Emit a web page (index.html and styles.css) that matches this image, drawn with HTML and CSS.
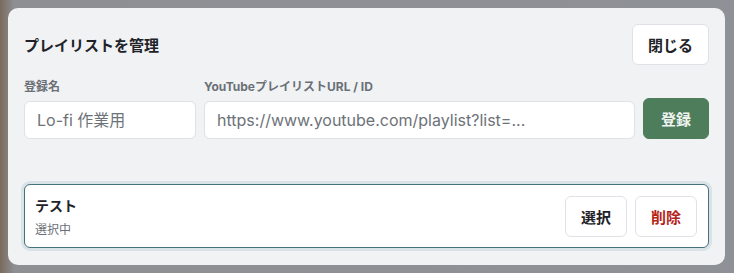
FILE: index.html
```html
<!DOCTYPE html>
<html lang="ja">
<head>
<meta charset="UTF-8" />
<title>プレイリストを管理</title>
<link rel="stylesheet" href="styles.css">
</head>
<body>

<div class="backdrop">
  <div class="modal">
    <div class="modal-head">
      <h2>プレイリストを管理</h2>
      <button class="btn">閉じる</button>
    </div>

    <div class="form-row">
      <div class="field field-name">
        <label>登録名</label>
        <input type="text" placeholder="Lo-fi 作業用" />
      </div>
      <div class="field field-url">
        <label>YouTubeプレイリストURL / ID</label>
        <input type="text" placeholder="https://www.youtube.com/playlist?list=..." />
      </div>
      <button class="btn btn-green">登録</button>
    </div>

    <ul class="list">
      <li class="item active">
        <div class="item-info">
          <div class="item-name">テスト</div>
          <div class="item-state">選択中</div>
        </div>
        <div class="item-actions">
          <button class="btn">選択</button>
          <button class="btn btn-danger">削除</button>
        </div>
      </li>
    </ul>
  </div>
</div>

</body>
</html>
```

FILE: styles.css
```css
* {
  box-sizing: border-box;
}
body {
  margin: 0;
  font-family: "Inter", "Noto Sans CJK JP", sans-serif;
  color: #1f2328;
}
.backdrop {
  width: 734px;
  height: 273px;
  padding: 8px 9px 8px 8px;
  background: linear-gradient(90deg, #7a6a5c 0px, #8d8f93 14px, #8e9196 100%);
}
.modal {
  height: 257px;
  background: #f0f2f4;
  border-radius: 10px;
  padding: 16px 16px 0 16px;
}
.modal-head {
  display: flex;
  align-items: center;
  justify-content: space-between;
}
.modal-head h2 {
  margin: 0;
  font-size: 15px;
  font-weight: 700;
}
.btn {
  font-family: inherit;
  font-size: 15px;
  font-weight: 700;
  color: #1f2328;
  background: #fff;
  border: 1px solid #dfe2e6;
  border-radius: 6px;
  height: 41px;
  padding: 0 15px;
}
.form-row {
  display: flex;
  align-items: flex-end;
  gap: 8px;
  margin-top: 12px;
}
.field label {
  display: block;
  font-size: 12px;
  font-weight: 700;
  color: #6b7077;
  margin-bottom: 7px;
}
.field input {
  width: 100%;
  height: 38px;
  padding: 0 12px;
  border: 1px solid #dfe2e6;
  border-radius: 6px;
  background: #fff;
  font-family: inherit;
  font-size: 16px;
}
.field input::placeholder {
  color: #6d7278;
}
.field-name {
  width: 172px;
}
.field-url {
  flex: 1;
}
.btn-green {
  width: 66px;
  padding: 0;
  background: #4e7d5c;
  border-color: #4e7d5c;
  color: #eef3ef;
}
.list {
  list-style: none;
  margin: 45px 0 0 0;
  padding: 0;
}
.item {
  display: flex;
  align-items: center;
  justify-content: space-between;
  height: 64px;
  padding: 0 11px 0 10px;
  background: #fff;
  border: 1px solid #dfe2e6;
  border-radius: 6px;
}
.item.active {
  border-color: #46707a;
  box-shadow: 0 0 0 3px #d8e2e7;
}
.item-name {
  font-size: 14px;
  font-weight: 700;
}
.item-state {
  margin-top: 5px;
  font-size: 12px;
  color: #6b7077;
}
.item-actions {
  display: flex;
  gap: 8px;
}
.item-actions .btn {
  width: 62px;
  padding: 0;
}
.btn-danger {
  color: #b42318;
}
```
